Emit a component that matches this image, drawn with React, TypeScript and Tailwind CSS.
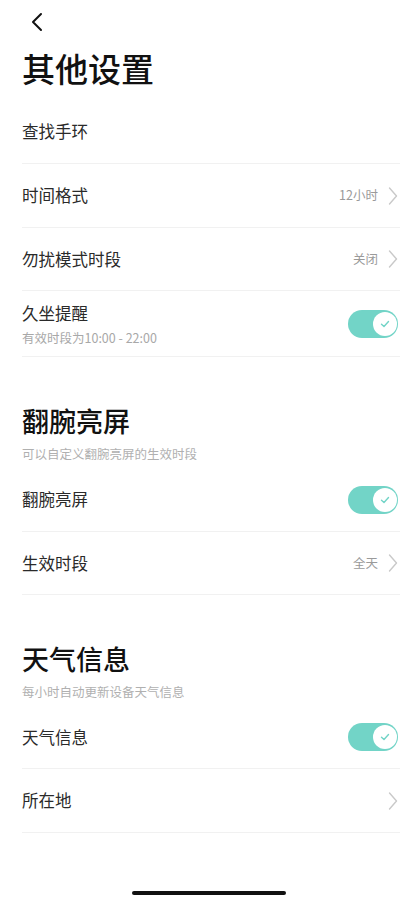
import React from 'react';

const font = { fontFamily: '"Noto Sans CJK SC", "Noto Sans", sans-serif' };

const Chevron: React.FC = () => (
  <svg width="10" height="20" viewBox="0 0 10 20" fill="none" className="shrink-0">
    <path d="M1.5 2 L8.5 10 L1.5 18" stroke="#c9c9c9" strokeWidth="1.4" strokeLinecap="round" strokeLinejoin="round" />
  </svg>
);

const Toggle: React.FC = () => (
  <div className="relative w-[50px] h-[28px] rounded-full bg-[#72d4c7] shrink-0">
    <div className="absolute right-[1px] top-[2px] w-[24px] h-[24px] rounded-full bg-white flex items-center justify-center">
      <svg width="12" height="12" viewBox="0 0 12 12" fill="none">
        <path d="M2.5 6.2 L5 8.5 L9.5 3.5" stroke="#72d4c7" strokeWidth="1.4" strokeLinecap="round" strokeLinejoin="round" />
      </svg>
    </div>
  </div>
);

interface RowProps {
  label: string;
  value?: string;
  arrow?: boolean;
  toggle?: boolean;
  h?: string;
}

const Row: React.FC<RowProps> = ({ label, value, arrow, toggle, h = 'h-[64px]' }) => (
  <div className={`${h} flex items-center justify-between border-b border-[#f1f1f1]`}>
    <span className="text-[16.5px] text-[#2a2a2a]">{label}</span>
    <div className="flex items-center gap-[10px] mr-[2px]">
      {value && <span className="text-[12.5px] text-[#9a9a9a]">{value}</span>}
      {arrow && <Chevron />}
      {toggle && <Toggle />}
    </div>
  </div>
);

const SectionHead: React.FC<{ title: string; desc: string }> = ({ title, desc }) => (
  <div className="mt-[47px]">
    <h2 className="text-[27px] leading-[34px] font-medium text-[#111]">{title}</h2>
    <p className="mt-[8px] text-[12.5px] leading-[16px] text-[#b0b0b0]">{desc}</p>
  </div>
);

export default function App() {
  return (
    <div className="h-[900px] flex flex-col bg-white" style={font}>
      <div className="h-[40px] pl-[30px] pt-[12px]">
        <svg width="13" height="20" viewBox="0 0 13 20" fill="none">
          <path d="M11 2 L3 10 L11 18" stroke="#111" strokeWidth="2" strokeLinecap="round" strokeLinejoin="round" />
        </svg>
      </div>

      <div className="pl-[22px] pr-[18px]">
        <h1 className="mt-[8px] text-[33px] leading-[40px] font-medium text-[#111]">其他设置</h1>

        <div className="mt-[12px]">
          <Row label="查找手环" />
          <Row label="时间格式" value="12小时" arrow />
          <Row label="勿扰模式时段" value="关闭" arrow h="h-[63px]" />
          <div className="h-[66px] flex items-center justify-between border-b border-[#f1f1f1]">
            <div className="flex flex-col">
              <span className="text-[16.5px] leading-[22px] text-[#2a2a2a]">久坐提醒</span>
              <span className="mt-[6px] text-[12.5px] leading-[16px] text-[#a8a8a8]">有效时段为10:00 - 22:00</span>
            </div>
            <div className="mr-[2px]">
              <Toggle />
            </div>
          </div>
        </div>

        <SectionHead title="翻腕亮屏" desc="可以自定义翻腕亮屏的生效时段" />
        <div className="mt-[6px]">
          <Row label="翻腕亮屏" toggle />
          <Row label="生效时段" value="全天" arrow h="h-[63px]" />
        </div>

        <SectionHead title="天气信息" desc="每小时自动更新设备天气信息" />
        <div className="mt-[6px]">
          <Row label="天气信息" toggle h="h-[63px]" />
          <Row label="所在地" arrow />
        </div>
      </div>

      <div className="mt-auto mb-[5px] mx-auto w-[154px] h-[4px] rounded-full bg-[#111]" />
    </div>
  );
}
